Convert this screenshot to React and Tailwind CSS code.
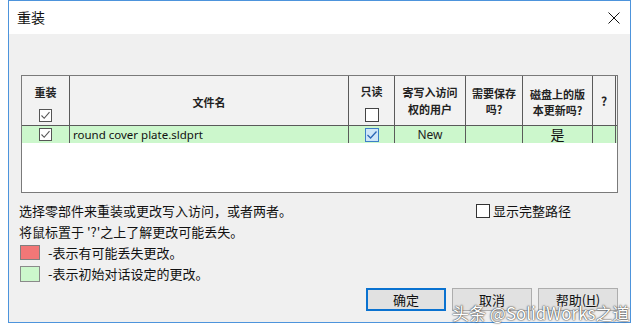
import React from "react";

const CJK = { fontFamily: '"Noto Sans CJK SC", "Noto Sans", sans-serif' };

function GrayCheck({ checked = true }) {
  return (
    <div className="w-[13px] h-[13px] border border-[#555555] bg-white flex items-center justify-center">
      {checked && (
        <svg width="11" height="11" viewBox="0 0 11 11">
          <path d="M1.5 5.5 L4.2 8.3 L9.5 2.2" fill="none" stroke="#555555" strokeWidth="1.1" />
        </svg>
      )}
    </div>
  );
}

function BlueCheck() {
  return (
    <div className="w-[14px] h-[14px] border border-[#3c7fc7] bg-[#cfe6f8] flex items-center justify-center">
      <svg width="12" height="12" viewBox="0 0 12 12">
        <path d="M1.5 6 L4.6 9 L10.5 2.5" fill="none" stroke="#2b66b5" strokeWidth="1.3" />
      </svg>
    </div>
  );
}

const cols = [48, 279, 46, 71, 57, 70, 23];

export default function App() {
  return (
    <div className="w-[640px] h-[333px] bg-white relative overflow-hidden" style={CJK}>
      <div className="ml-[8px] w-[623px] h-[323px] border border-[#4d94dc] bg-[#f0f0f0] flex flex-col">
        {/* Title bar */}
        <div className="h-[33px] bg-white flex items-center justify-between pl-[8px] pr-[10px] shrink-0">
          <span className="text-[14px] text-[#111]">重装</span>
          <svg width="12" height="12" viewBox="0 0 12 12">
            <path d="M0.5 0.5 L11.5 11.5 M11.5 0.5 L0.5 11.5" stroke="#111" strokeWidth="1" />
          </svg>
        </div>

        {/* Body */}
        <div className="flex flex-col pt-[41px]">
          {/* List */}
          <div className="ml-[12px] w-[597px] h-[118px] border border-[#7a7a7a] bg-white flex flex-col">
            <div className="flex h-[50px] bg-[#f2f2f2] border-b border-[#5a5a5a] text-[11px] font-bold text-[#222]">
              <div className="flex flex-col items-center border-r border-[#5a5a5a] pt-[9px]" style={{ width: cols[0] }}>
                <span className="leading-[14px]">重装</span>
                <div className="mt-[10px]"><GrayCheck /></div>
              </div>
              <div className="flex items-center justify-center border-r border-[#5a5a5a]" style={{ width: cols[1] }}>
                <span className="leading-[14px] pt-[2px]">文件名</span>
              </div>
              <div className="flex flex-col items-center border-r border-[#5a5a5a] pt-[8px]" style={{ width: cols[2] }}>
                <span className="leading-[14px]">只读</span>
                <div className="mt-[10px] w-[14px] h-[14px] border border-[#444] bg-white"></div>
              </div>
              <div className="flex items-center justify-center text-center border-r border-[#5a5a5a] leading-[17px] pt-[1px]" style={{ width: cols[3] }}>
                <span>寄写入访问<br />权的用户</span>
              </div>
              <div className="flex items-center justify-center text-center border-r border-[#5a5a5a] leading-[16px] pt-[1px]" style={{ width: cols[4] }}>
                <span>需要保存<br />吗?</span>
              </div>
              <div className="flex items-center justify-center text-center border-r border-[#5a5a5a] leading-[16px] pt-[2px]" style={{ width: cols[5] }}>
                <span>磁盘上的版<br />本更新吗?</span>
              </div>
              <div className="flex items-center justify-center border-r border-[#5a5a5a] text-[12px]" style={{ width: cols[6] }}>
                <span>?</span>
              </div>
            </div>
            <div className="flex h-[17px] bg-[#ccf7cc]">
              <div className="flex items-center justify-center border-r border-[#5a5a5a]" style={{ width: cols[0] }}>
                <GrayCheck />
              </div>
              <div className="flex items-center border-r border-[#5a5a5a] pl-[3px] text-[11.5px] text-[#111]" style={{ width: cols[1], fontFamily: '"Noto Sans", sans-serif' }}>
                round cover plate.sldprt
              </div>
              <div className="flex items-center justify-center border-r border-[#5a5a5a] pl-[1px]" style={{ width: cols[2] }}>
                <BlueCheck />
              </div>
              <div className="flex items-center justify-center border-r border-[#5a5a5a] text-[12px] text-[#222]" style={{ width: cols[3], fontFamily: '"Noto Sans", sans-serif' }}>
                New
              </div>
              <div className="border-r border-[#5a5a5a]" style={{ width: cols[4] }}></div>
              <div className="flex items-center justify-center border-r border-[#5a5a5a] text-[14px] text-[#111]" style={{ width: cols[5] }}>
                是
              </div>
              <div className="border-r border-[#5a5a5a]" style={{ width: cols[6] }}></div>
            </div>
          </div>

          {/* Info lines */}
          <div className="mt-[7px] flex flex-col text-[13px] text-[#111]">
            <div className="flex items-center h-[21px]">
              <span className="ml-[10px] w-[457px] shrink-0">选择零部件来重装或更改写入访问，或者两者。</span>
              <div className="w-[14px] h-[14px] border border-[#333] bg-white"></div>
              <span className="ml-[3px]">显示完整路径</span>
            </div>
            <div className="flex items-center h-[21px]">
              <span className="ml-[10px]">将鼠标置于 '?'之上了解更改可能丢失。</span>
            </div>
            <div className="flex items-center h-[21px]">
              <div className="ml-[11px] w-[20px] h-[15px] border border-[#808080] bg-[#f27777]"></div>
              <span className="ml-[8px]">-表示有可能丢失更改。</span>
            </div>
            <div className="flex items-center h-[21px]">
              <div className="ml-[11px] w-[20px] h-[16px] border border-[#8a8a8a] bg-[#ccf7cc]"></div>
              <span className="ml-[8px]">-表示初始对话设定的更改。</span>
            </div>
          </div>

          {/* Buttons */}
          <div className="mt-[4px] mr-[12px] flex justify-end gap-[6px] text-[13px] text-[#111]">
            <div className="w-[80px] h-[23px] border-2 border-[#0a72d0] bg-[#e1e1e1] flex items-center justify-center">确定</div>
            <div className="w-[80px] h-[23px] border border-[#adadad] bg-[#e1e1e1] flex items-center justify-center">取消</div>
            <div className="w-[80px] h-[23px] border border-[#adadad] bg-[#e1e1e1] flex items-center justify-center">
              帮助(<span className="underline">H</span>)
            </div>
          </div>
        </div>
      </div>

      {/* Watermark */}
      <div
        className="absolute left-[452px] top-[302px] text-[17px] leading-[22px] text-white whitespace-nowrap [text-shadow:0_0_2px_#333,0_0_1px_#333]"
        style={CJK}
      >
        头条 @SolidWorks之道
      </div>
    </div>
  );
}
